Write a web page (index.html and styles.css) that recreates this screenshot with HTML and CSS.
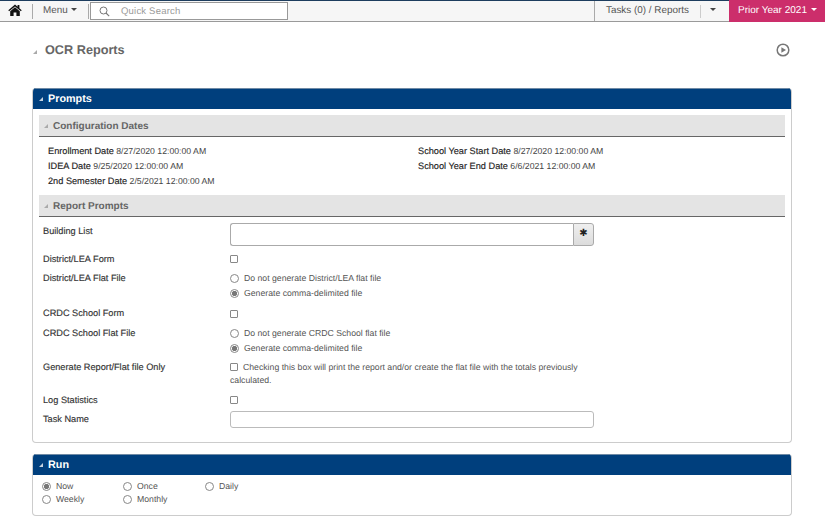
FILE: index.html
```html
<!DOCTYPE html>
<html lang="en">
<head>
<meta charset="utf-8">
<title>OCR Reports</title>
<link rel="stylesheet" href="styles.css">
</head>
<body>
<nav class="nav">
  <a class="nav-home"><svg width="14" height="12" viewBox="0 0 14 12"><path d="M7 0.5 0.3 6.2l.8 1L7 2.4l5.9 4.8.8-1L11.4 4.3V1H9.6v1.8z" fill="#111"/><path d="M7 3.3 2.2 7.2V12h3.4V8.6h2.8V12h3.4V7.2z" fill="#111"/></svg></a>
  <span class="nav-sep"></span>
  <a class="nav-menu">Menu <i class="caret"></i></a>
  <span class="nav-sep"></span>
  <div class="search">
    <svg width="11" height="11" viewBox="0 0 11 11"><circle cx="4.5" cy="4.5" r="3.5" fill="none" stroke="#777" stroke-width="1"/><path d="M7 7l3.2 3.2" stroke="#777" stroke-width="1.1"/></svg>
    <span>Quick Search</span>
  </div>
  <div class="nav-right">
    <a class="tasks">Tasks (0) / Reports</a>
    <a class="tasks-caret"><i class="caret"></i></a>
    <a class="year">Prior Year 2021 <i class="caret caret-w"></i></a>
  </div>
</nav>
<main class="page">
  <header class="title-row">
    <i class="tri tri-grey"></i>
    <h1>OCR Reports</h1>
    <svg class="play" width="14" height="14" viewBox="0 0 14 14"><circle cx="7" cy="7" r="5.8" fill="none" stroke="#777" stroke-width="1.5"/><path d="M5.4 4.2 10 7 5.4 9.8z" fill="#777"/></svg>
  </header>

  <section class="panel prompts">
    <h2 class="panel-head"><i class="tri tri-white"></i>Prompts</h2>
    <div class="panel-body">
      <h3 class="sub-head"><i class="tri tri-grey"></i>Configuration Dates</h3>
      <div class="dates">
        <div class="date-col">
          <p><b>Enrollment Date</b> 8/27/2020 12:00:00 AM</p>
          <p><b>IDEA Date</b> 9/25/2020 12:00:00 AM</p>
          <p><b>2nd Semester Date</b> 2/5/2021 12:00:00 AM</p>
        </div>
        <div class="date-col">
          <p><b>School Year Start Date</b> 8/27/2020 12:00:00 AM</p>
          <p><b>School Year End Date</b> 6/6/2021 12:00:00 AM</p>
        </div>
      </div>
      <h3 class="sub-head"><i class="tri tri-grey"></i>Report Prompts</h3>
      <div class="form">
        <div class="row r-building"><label>Building List</label>
          <div class="picker"><span class="picker-input"></span><span class="picker-btn">&#10033;</span></div></div>
        <div class="row r-check"><label>District/LEA Form</label><span class="box"></span></div>
        <div class="row r-radio"><label>District/LEA Flat File</label>
          <div class="opts">
            <div class="opt"><span class="radio"></span>Do not generate District/LEA flat file</div>
            <div class="opt"><span class="radio on"></span>Generate comma-delimited file</div>
          </div></div>
        <div class="row r-check2"><label>CRDC School Form</label><span class="box"></span></div>
        <div class="row r-radio r-radio-b"><label>CRDC School Flat File</label>
          <div class="opts">
            <div class="opt"><span class="radio"></span>Do not generate CRDC School flat file</div>
            <div class="opt"><span class="radio on"></span>Generate comma-delimited file</div>
          </div></div>
        <div class="row r-only"><label>Generate Report/Flat file Only</label>
          <div class="only"><span class="box box-in"></span>Checking this box will print the report and/or create the flat file with the totals previously calculated.</div></div>
        <div class="row r-log"><label>Log Statistics</label><span class="box"></span></div>
        <div class="row r-task"><label>Task Name</label><span class="task-input"></span></div>
      </div>
    </div>
  </section>

  <section class="panel run">
    <h2 class="panel-head"><i class="tri tri-white"></i>Run</h2>
    <div class="run-grid">
      <div class="opt"><span class="radio on"></span>Now</div>
      <div class="opt"><span class="radio"></span>Once</div>
      <div class="opt"><span class="radio"></span>Daily</div>
      <div class="opt"><span class="radio"></span>Weekly</div>
      <div class="opt"><span class="radio"></span>Monthly</div>
    </div>
  </section>
</main>
</body>
</html>
```
FILE: styles.css
```css
* { box-sizing: border-box; }
html, body { margin: 0; height: 520px; overflow: hidden; background: #fff; }
body { font: 10px/15px "Liberation Sans", Arial, sans-serif; color: #444; text-rendering: geometricPrecision; }
h1, h2, h3, p { margin: 0; }
i { display: inline-block; }

.nav { display: flex; align-items: stretch; height: 22px; background: #f6f6f6; border-top: 1px solid #1d3d5e; border-bottom: 1px solid #9a9a9a; }
.nav-home { width: 32px; padding: 3px 0 0 8px; }
.nav-sep { width: 1px; height: 15px; margin-top: 3px; background: #aaa; }
.nav-menu { width: 55px; padding-left: 10px; line-height: 19px; color: #555; font-size: 9.9px; }
.caret { width: 0; height: 0; margin: 0 0 2px 1px; border-left: 3px solid transparent; border-right: 3px solid transparent; border-top: 3px solid #444; }
.caret-w { border-top-color: #fff; }
.search { display: flex; align-items: center; width: 198px; height: 18px; margin: 1px 0 0 1px; padding-left: 8px; gap: 11px; background: #fff; border: 1px solid #999; color: #999; font-size: 9.5px; letter-spacing: .2px; }
.nav-right { display: flex; margin-left: auto; }
.tasks { width: 106px; padding-left: 11px; border-left: 1px solid #aaa; line-height: 19px; color: #555; font-size: 9.9px; }
.tasks-caret { position: relative; width: 28px; padding-right: 3px; line-height: 19px; text-align: center; }
.tasks-caret::before { content: ""; position: absolute; left: 0; top: 4px; height: 13px; width: 1px; background: #ccc; }
.year { width: 96px; margin: -1px 0 -1px 1px; padding: 1px 0 0 9px; background: #cc2e6b; color: #fff; line-height: 19px; }

.page { padding: 0 33px 0 32px; }
.title-row { position: relative; display: flex; align-items: flex-start; height: 66px; padding-top: 21px; }
.title-row h1 { margin-left: 8px; font-size: 12.7px; font-weight: bold; color: #666; }
.title-row .tri { margin: 7px 0 0 1px; }
.play { position: absolute; right: 2px; top: 21px; }
.tri { width: 0; height: 0; border-style: solid; border-width: 0 0 4px 4px; border-color: transparent transparent #aaa transparent; }
.tri-white { border-bottom-color: #c6d3e0; margin: 0 5px 0 6px; }
.tri-grey { border-bottom-color: #aaa; }

.panel { border: 1px solid #ccc; border-top: 0; border-radius: 4px; overflow: hidden; }
.panel-head { display: flex; align-items: center; height: 21px; background: #003f7d; border-top: 1px solid #6f8aa5; color: #fff; font-size: 10.8px; font-weight: bold; }
.prompts { height: 355px; }
.panel-body { padding: 6px 6px 0; }
.sub-head { display: flex; align-items: center; height: 22px; padding-top: 1px; background: #e4e4e4; border-bottom: 1px solid #666; color: #666; font-size: 10px; font-weight: bold; }
.sub-head .tri { margin: 0 5px 0 5px; }
.dates { display: grid; grid-template-columns: 370px 1fr; height: 58px; padding: 7px 0 0 9px; font-size: 8.7px; }
.date-col p { height: 15px; line-height: 15px; }
.date-col b { font-size: 9.2px; font-weight: normal; color: #222; -webkit-text-stroke: .15px #222; }

.form { padding-left: 4px; }
.row { display: grid; grid-template-columns: 187px 1fr; }
.row label { padding-top: 1px; color: #333; -webkit-text-stroke: .15px #333; font-size: 9.2px; }
.r-building { height: 34px; padding-top: 6px; }
.picker { display: flex; width: 364px; height: 23px; }
.picker-input { flex: 1; border: 1px solid #aaa; border-right: 0; border-radius: 3px 0 0 3px; }
.picker-btn { width: 21px; background: linear-gradient(#efefef, #dcdcdc); border: 1px solid #aaa; border-radius: 0 3px 3px 0; text-align: center; line-height: 20px; font-size: 10px; color: #222; }
.r-check { height: 19px; }
.r-check2 { height: 20px; }
.r-check2 .box { margin-top: 5px; }
.box { display: block; width: 8px; height: 8px; margin-top: 4px; border: 1px solid #888; border-radius: 1px; background: #fff; }
.r-radio { height: 35px; }
.r-radio-b { height: 33px; }
.opts { padding-top: 1px; }
.opt { display: flex; align-items: center; height: 15px; color: #555; font-size: 8.7px; }
.radio { width: 9px; height: 9px; margin-right: 5px; border: 1px solid #888; border-radius: 50%; background: #fff; }
.radio.on { background: radial-gradient(circle, #777 0 2.2px, #fff 3px); }
.r-only { height: 34px; padding-top: 2px; }
.r-only label { padding-top: 0; }
.only { width: 364px; line-height: 13px; padding-top: 1px; color: #555; font-size: 8.7px; }
.box-in { display: inline-block; margin: 0 5px -1px 0; }
.r-log { height: 19px; }
.r-task { height: 20px; }
.task-input { display: block; width: 364px; height: 17px; border: 1px solid #bbb; border-radius: 3px; }

.run { margin-top: 11px; height: 62px; }
.run-grid { display: grid; grid-template-columns: 81px 82px 1fr; grid-auto-rows: 13px; padding: 5px 0 0 9px; }
.run-grid .opt { height: 13px; }
```
